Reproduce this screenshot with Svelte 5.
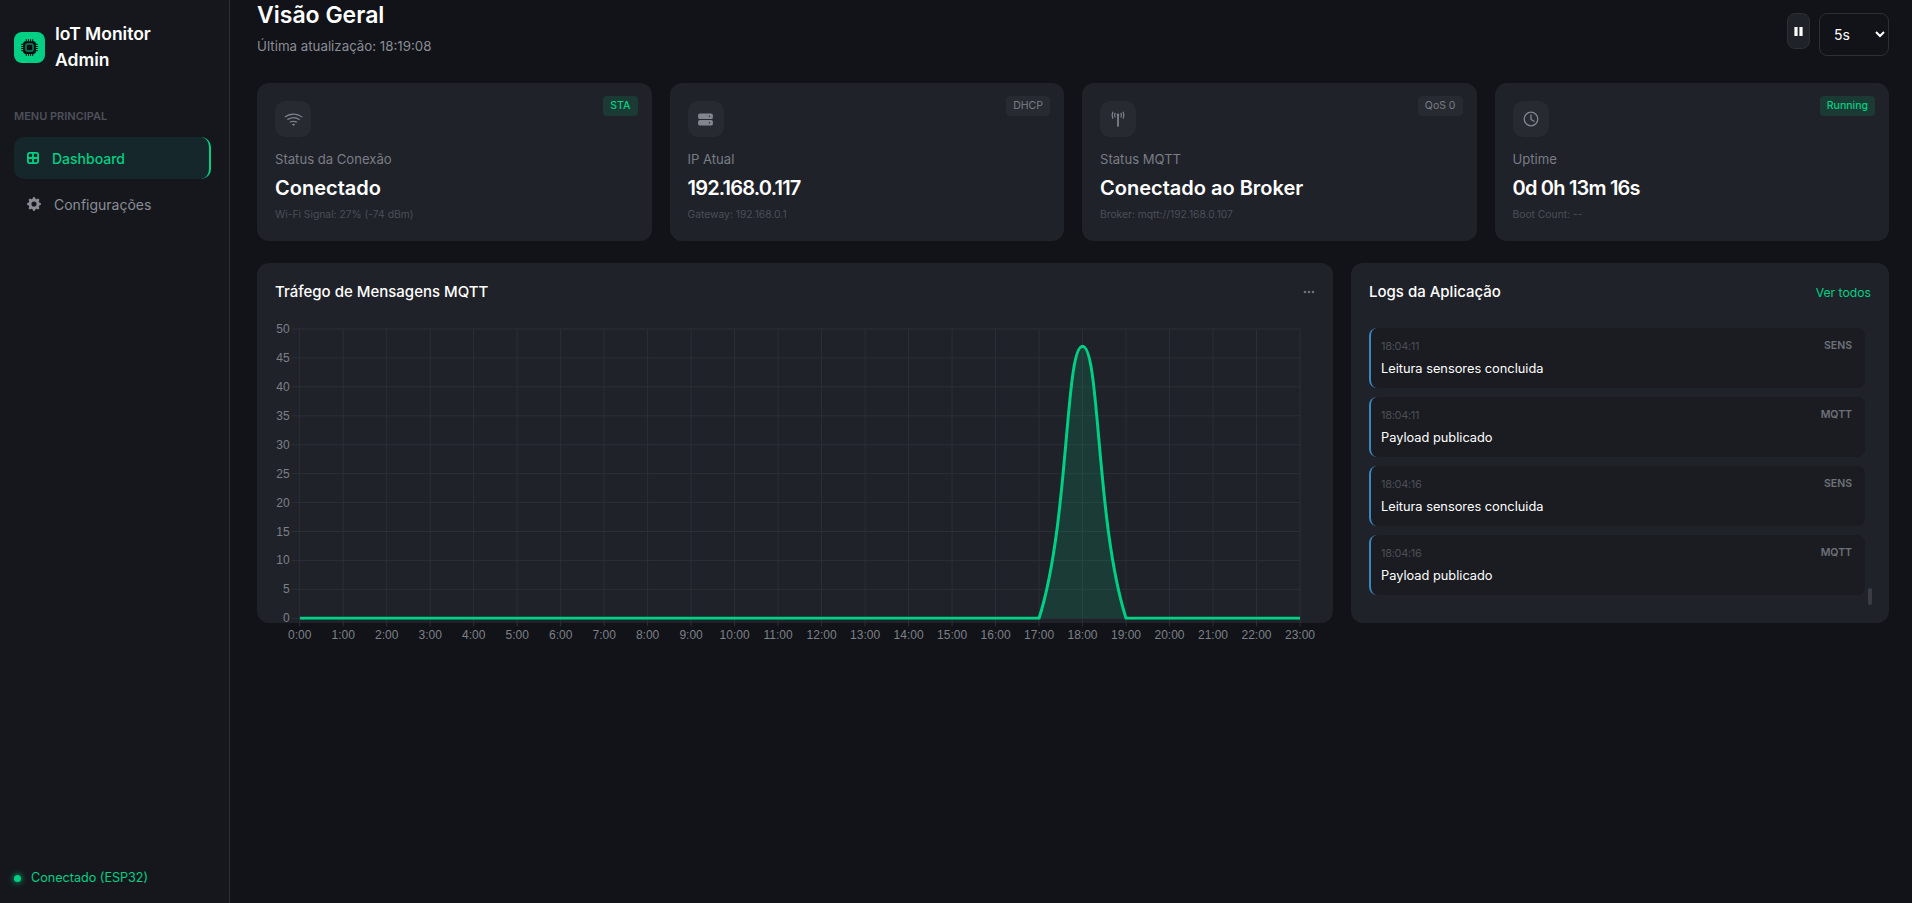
<script>
  const stats = [
    { icon: 'wifi', label: 'Status da Conexão', value: 'Conectado', sub: 'Wi-Fi Signal: 27% (-74 dBm)', badge: 'STA', on: true },
    { icon: 'server', label: 'IP Atual', value: '192.168.0.117', sub: 'Gateway: 192.168.0.1', badge: 'DHCP', on: false, numeric: true },
    { icon: 'antenna', label: 'Status MQTT', value: 'Conectado ao Broker', sub: 'Broker: mqtt://192.168.0.107', badge: 'QoS 0', on: false },
    { icon: 'clock', label: 'Uptime', value: '0d 0h 13m 16s', sub: 'Boot Count: --', badge: 'Running', on: true, numeric: true },
  ];

  const logs = [
    { time: '18:04:11', tag: 'SENS', text: 'Leitura sensores concluida' },
    { time: '18:04:11', tag: 'MQTT', text: 'Payload publicado' },
    { time: '18:04:16', tag: 'SENS', text: 'Leitura sensores concluida' },
    { time: '18:04:16', tag: 'MQTT', text: 'Payload publicado' },
  ];

  // chart geometry, in svg coordinates (svg starts at the card's left edge)
  const W = 1076, H = 340;
  const left = 42.7, right = 1043, top = 16, bottom = 305.3;
  const stepX = (right - left) / 23;
  const yScale = (bottom - top) / 50;
  const xAt = (i) => left + i * stepX;
  const yAt = (v) => bottom - v * yScale;

  const hours = Array.from({ length: 24 }, (_, i) => i);
  const ticks = [50, 45, 40, 35, 30, 25, 20, 15, 10, 5, 0];
  const values = hours.map((h) => (h === 18 ? 47 : 0));

  // bezier smoothing with tension 0.4, control points capped to the plot area
  function controlPoints(pts, t = 0.4) {
    return pts.map((p, i) => {
      const a = pts[i - 1] ?? p, b = pts[i + 1] ?? p;
      const d1 = Math.hypot(p.x - a.x, p.y - a.y), d2 = Math.hypot(b.x - p.x, b.y - p.y);
      const sum = d1 + d2 || 1;
      const fa = (t * d1) / sum, fb = (t * d2) / sum;
      return {
        px: p.x - fa * (b.x - a.x), py: Math.min(bottom, p.y - fa * (b.y - a.y)),
        nx: p.x + fb * (b.x - a.x), ny: Math.min(bottom, p.y + fb * (b.y - a.y)),
      };
    });
  }

  const pts = values.map((v, i) => ({ x: xAt(i), y: yAt(v) }));
  const cps = controlPoints(pts);
  const linePath = pts.reduce((d, p, i) => {
    if (i === 0) return `M${p.x} ${p.y}`;
    return `${d} C${cps[i - 1].nx} ${cps[i - 1].ny} ${cps[i].px} ${cps[i].py} ${p.x} ${p.y}`;
  }, '');
  const areaPath = `${linePath} L${right} ${bottom} L${left} ${bottom} Z`;
</script>

<div class="layout">
  <aside class="sidebar">
    <div class="brand">
      <span class="brand-icon">
        <svg viewBox="0 0 16 16" width="17" height="17" fill="#0c0e12">
          <path d="M5 0a.5.5 0 0 1 .5.5V2h1V.5a.5.5 0 0 1 1 0V2h1V.5a.5.5 0 0 1 1 0V2h1V.5a.5.5 0 0 1 1 0V2A2.5 2.5 0 0 1 14 4.5h1.500a.5.5 0 0 1 0 1H14v1h1.500a.5.5 0 0 1 0 1H14v1h1.500a.5.5 0 0 1 0 1H14v1h1.500a.5.5 0 0 1 0 1H14a2.500 2.500 0 0 1-2.500 2.500v1.500a.5.5 0 0 1-1 0V14h-1v1.500a.5.5 0 0 1-1 0V14h-1v1.500a.5.5 0 0 1-1 0V14h-1v1.500a.5.5 0 0 1-1 0V14A2.500 2.500 0 0 1 2 11.500H.5a.5.5 0 0 1 0-1H2v-1H.5a.5.5 0 0 1 0-1H2v-1H.5a.5.5 0 0 1 0-1H2v-1H.5a.5.5 0 0 1 0-1H2A2.500 2.500 0 0 1 4.500 2V.5A.5.5 0 0 1 5 0Z"/>
          <rect x="4.700" y="4.700" width="6.600" height="6.600" rx=".6" fill="#0c0e12" stroke="#00d084" stroke-width=".9"/>
        </svg>
      </span>
      <span class="brand-name">IoT Monitor Admin</span>
    </div>

    <p class="menu-title">MENU PRINCIPAL</p>

    <nav class="menu">
      <a class="menu-item active" href="#dashboard">
        <svg viewBox="0 0 16 16" width="12" height="12" fill="none" stroke="currentColor" stroke-width="2.400">
          <rect x="1.200" y="1.200" width="13.600" height="13.600" rx="2"/>
          <path d="M8 1v14M1 8h14"/>
        </svg>
        <span>Dashboard</span>
      </a>
      <a class="menu-item" href="#config">
        <svg viewBox="0 0 16 16" width="14" height="14" fill="currentColor">
          <path d="M9.405 1.050c-.413-1.400-2.397-1.400-2.810 0l-.1.340a1.464 1.464 0 0 1-2.105.872l-.31-.170c-1.283-.698-2.686.705-1.987 1.987l.169.311c.446.820.023 1.841-.872 2.105l-.340.100c-1.400.413-1.400 2.397 0 2.810l.340.100a1.464 1.464 0 0 1 .872 2.105l-.170.310c-.698 1.283.705 2.686 1.987 1.987l.311-.169a1.464 1.464 0 0 1 2.105.872l.100.340c.413 1.400 2.397 1.400 2.810 0l.100-.340a1.464 1.464 0 0 1 2.105-.872l.310.170c1.283.698 2.686-.705 1.987-1.987l-.169-.311a1.464 1.464 0 0 1 .872-2.105l.340-.100c1.400-.413 1.400-2.397 0-2.810l-.340-.100a1.464 1.464 0 0 1-.872-2.105l.170-.310c.698-1.283-.705-2.686-1.987-1.987l-.311.169a1.464 1.464 0 0 1-2.105-.872l-.100-.340ZM8 10.930a2.929 2.929 0 1 1 0-5.860 2.929 2.929 0 0 1 0 5.858Z"/>
        </svg>
        <span>Configurações</span>
      </a>
    </nav>

    <div class="device">
      <span class="dot"></span>
      <span>Conectado (ESP32)</span>
    </div>
  </aside>

  <main class="content">
    <header class="page-head">
      <div>
        <h1>Visão Geral</h1>
        <p class="updated">Última atualização: 18:19:08</p>
      </div>
      <div class="controls">
        <button class="pause" aria-label="Pausar">
          <svg viewBox="0 0 9 9" width="9" height="9" fill="#fff"><rect width="3.200" height="9" x=".4"/><rect width="3.200" height="9" x="5.400"/></svg>
        </button>
        <select class="interval">
          <option>5s</option>
          <option>10s</option>
          <option>30s</option>
        </select>
      </div>
    </header>

    <section class="stats">
      {#each stats as s}
        <article class="card stat">
          <span class="badge" class:on={s.on}>{s.badge}</span>
          <span class="stat-icon">
            {#if s.icon === 'wifi'}
              <svg viewBox="0 0 16 16" width="19" height="19" fill="currentColor">
                <path d="M15.384 6.115a.485.485 0 0 0-.047-.736A12.440 12.440 0 0 0 8 3C5.259 3 2.723 3.882.663 5.379a.485.485 0 0 0-.048.736.518.518 0 0 0 .668.050A11.448 11.448 0 0 1 8 4c2.507 0 4.827.802 6.716 2.164.205.148.490.130.668-.049Z"/>
                <path d="M13.229 8.271a.482.482 0 0 0-.063-.745A9.455 9.455 0 0 0 8 6c-1.905 0-3.680.560-5.166 1.526a.480.480 0 0 0-.063.745.525.525 0 0 0 .652.065A8.460 8.460 0 0 1 8 7a8.460 8.460 0 0 1 4.576 1.336c.206.132.480.108.653-.065Zm-2.183 2.183c.226-.226.185-.605-.100-.750A6.473 6.473 0 0 0 8 9c-1.060 0-2.062.254-2.946.704-.285.145-.326.524-.100.750l.015.015c.160.160.407.190.611.090A5.478 5.478 0 0 1 8 10c.868 0 1.690.201 2.420.560.203.100.450.070.610-.091l.016-.015ZM9.060 12.440c.196-.196.198-.520-.040-.660A1.990 1.990 0 0 0 8 11.500a1.990 1.990 0 0 0-1.020.280c-.238.140-.236.464-.040.660l.706.706a.500.500 0 0 0 .707 0l.707-.707Z"/>
              </svg>
            {:else if s.icon === 'server'}
              <svg viewBox="0 0 16 14" width="15" height="13" fill="currentColor">
                <path d="M2 .5h12a2 2 0 0 1 2 2v2a2 2 0 0 1-2 2H2a2 2 0 0 1-2-2v-2a2 2 0 0 1 2-2Zm9.500 3a.75.75 0 1 0 1.500 0 .75.75 0 0 0-1.500 0ZM2 7.500h12a2 2 0 0 1 2 2v2a2 2 0 0 1-2 2H2a2 2 0 0 1-2-2v-2a2 2 0 0 1 2-2Zm9.500 3a.75.75 0 1 0 1.500 0 .75.75 0 0 0-1.500 0Z" fill-rule="evenodd"/>
              </svg>
            {:else if s.icon === 'antenna'}
              <svg viewBox="0 0 16 16" width="16" height="16" fill="none" stroke="currentColor" stroke-width="1.200" stroke-linecap="round">
                <path d="M8 4.500V15" stroke-width="1.700"/>
                <circle cx="8" cy="3.800" r="1.200" fill="currentColor" stroke="none"/>
                <path d="M5 2.200c-.5 1.200-.5 2.600 0 3.800M11 2.200c.5 1.200.5 2.600 0 3.800M2.800 1.200c-.9 1.800-.9 4.200 0 6M13.200 1.200c.9 1.800.9 4.200 0 6"/>
              </svg>
            {:else}
              <svg viewBox="0 0 16 16" width="16" height="16" fill="none" stroke="currentColor" stroke-width="1.300" stroke-linecap="round" stroke-linejoin="round">
                <circle cx="8" cy="8" r="6.800"/>
                <path d="M8 3.800V8.500l3 1.800"/>
              </svg>
            {/if}
          </span>
          <p class="stat-label">{s.label}</p>
          <p class="stat-value" class:numeric={s.numeric}>{s.value}</p>
          <p class="stat-sub">{s.sub}</p>
        </article>
      {/each}
    </section>

    <section class="panels">
      <article class="card chart-card">
        <div class="panel-head">
          <h2>Tráfego de Mensagens MQTT</h2>
          <svg class="more" viewBox="0 0 12 4" width="12" height="4" fill="#6e7179">
            <circle cx="2" cy="2" r="1.300"/><circle cx="6" cy="2" r="1.300"/><circle cx="10" cy="2" r="1.300"/>
          </svg>
        </div>
        <svg class="chart" viewBox="0 0 {W} {H}" width={W} height={H}>
          <defs>
            <clipPath id="plot">
              <rect x={left} y={top} width={right - left} height={bottom - top + 1.500}/>
            </clipPath>
          </defs>

          {#each ticks as t}
            <line class="grid" x1={left - 8} x2={right} y1={yAt(t)} y2={yAt(t)}/>
            <text class="tick" x={left - 10} y={yAt(t) + 4} text-anchor="end">{t}</text>
          {/each}
          {#each hours as h}
            <line class="grid" x1={xAt(h)} x2={xAt(h)} y1={top} y2={bottom + 8}/>
            <text class="tick" x={xAt(h)} y={bottom + 21} text-anchor="middle">{h}:00</text>
          {/each}

          <g clip-path="url(#plot)">
            <path d={areaPath} fill="#00d084" fill-opacity="0.15"/>
            <path d={linePath} fill="none" stroke="#00d084" stroke-width="3"/>
          </g>
        </svg>
      </article>

      <article class="card logs-card">
        <div class="panel-head">
          <h2>Logs da Aplicação</h2>
          <a class="see-all" href="#logs">Ver todos</a>
        </div>
        <div class="log-list">
          {#each logs as log}
            <div class="log">
              <div class="log-top">
                <span class="log-time">{log.time}</span>
                <span class="log-tag">{log.tag}</span>
              </div>
              <p class="log-text">{log.text}</p>
            </div>
          {/each}
          <span class="thumb"></span>
        </div>
      </article>
    </section>
  </main>
</div>

<style>
  :global(body) {
    background: #111318;
    color: #fff;
    font-family: Inter, "Liberation Sans", sans-serif;
    overflow: hidden;
  }

  p, h1, h2 { margin: 0; }

  .layout {
    display: flex;
    height: 903px;
  }

  /* sidebar */
  .sidebar {
    width: 230px;
    flex: none;
    box-sizing: border-box;
    background: #15171d;
    border-right: 1px solid #2c2f36;
    padding: 21px 18px 15px 14px;
    display: flex;
    flex-direction: column;
  }

  .brand {
    display: flex;
    align-items: center;
    gap: 10px;
  }

  .brand-icon {
    width: 31px;
    height: 31px;
    flex: none;
    border-radius: 8px;
    background: #00d084;
    display: flex;
    align-items: center;
    justify-content: center;
  }

  .brand-name {
    width: 120px;
    font-size: 17.500px;
    font-weight: 600;
    line-height: 26px;
  }

  .menu-title {
    margin-top: 35px;
    color: #4d5059;
    font-size: 11px;
    font-weight: 600;
    line-height: 16px;
  }

  .menu {
    margin-top: 13px;
    display: flex;
    flex-direction: column;
    gap: 4px;
  }

  .menu-item {
    height: 42px;
    box-sizing: border-box;
    padding-left: 13px;
    display: flex;
    align-items: center;
    gap: 13px;
    border-radius: 10px;
    color: #8a8d95;
    font-size: 14px;
    text-decoration: none;
  }

  .menu-item.active {
    background: #15272a;
    border-right: 2px solid #00d084;
    color: #00d084;
    font-weight: 500;
  }

  .device {
    margin-top: auto;
    display: flex;
    align-items: center;
    gap: 10px;
    color: #00d084;
    font-size: 12.600px;
    line-height: 20px;
  }

  .dot {
    width: 7px;
    height: 7px;
    border-radius: 50%;
    background: #00d084;
    box-shadow: 0 0 6px #00d084;
  }

  /* main area */
  .content {
    flex: 1;
    min-width: 0;
    padding: 0 23px 0 27px;
  }

  .page-head {
    height: 83px;
    display: flex;
    justify-content: space-between;
    align-items: flex-start;
  }

  h1 {
    font-size: 23px;
    font-weight: 600;
    line-height: 30px;
  }

  .updated {
    margin-top: 6px;
    color: #8a8d95;
    font-size: 13.300px;
    line-height: 20px;
  }

  .controls {
    margin-top: 13px;
    display: flex;
    align-items: flex-start;
    gap: 9px;
  }

  .pause {
    width: 23px;
    height: 36px;
    padding: 0;
    border: 1px solid #2c2f36;
    border-radius: 8px;
    background: #1f2229;
    display: flex;
    align-items: center;
    justify-content: center;
  }

  .interval {
    width: 70px;
    height: 43px;
    padding: 0 8px 0 10px;
    border: 1px solid #2c2f36;
    border-radius: 8px;
    background: #111318;
    color: #fff;
    font-family: inherit;
    font-size: 14px;
  }

  .stats {
    display: grid;
    grid-template-columns: repeat(4, 1fr);
    gap: 18px;
  }

  .card {
    position: relative;
    background: #1f2229;
    border-radius: 12px;
  }

  .stat {
    height: 158px;
    box-sizing: border-box;
    padding: 18px;
  }

  .badge {
    position: absolute;
    top: 13px;
    right: 14px;
    height: 20px;
    padding: 0 7px;
    border-radius: 4px;
    background: #272a31;
    color: #7a7d85;
    font-size: 10.500px;
    line-height: 20px;
  }

  .badge.on {
    background: #1a3a33;
    color: #00d084;
    font-weight: 500;
  }

  .stat-icon {
    width: 36px;
    height: 36px;
    border-radius: 10px;
    background: #272a31;
    color: #82858d;
    display: flex;
    align-items: center;
    justify-content: center;
  }

  .stat-label {
    margin-top: 13px;
    color: #7a7d85;
    font-size: 13.100px;
    line-height: 18px;
  }

  .stat-value {
    margin-top: 7px;
    font-size: 20px;
    font-weight: 600;
    line-height: 26px;
  }

  .stat-value.numeric {
    letter-spacing: -0.8px;
  }

  .stat-sub {
    margin-top: 5px;
    color: #4b4e57;
    font-size: 10.300px;
    line-height: 16px;
  }

  .panels {
    margin-top: 22px;
    display: grid;
    grid-template-columns: 2fr 1fr;
    gap: 18px;
  }

  .chart-card,
  .logs-card {
    height: 360px;
    box-sizing: border-box;
  }

  .panel-head {
    display: flex;
    align-items: center;
    justify-content: space-between;
    padding: 18px 18px 0;
    height: 22px;
  }

  h2 {
    font-size: 15px;
    font-weight: 500;
    line-height: 22px;
  }

  .chart {
    display: block;
    margin-top: 10px;
    overflow: visible;
  }

  .grid {
    stroke: #2c2f36;
    stroke-width: 1;
  }

  .tick {
    fill: #7d8087;
    font-family: "Liberation Sans", sans-serif;
    font-size: 12px;
  }

  .see-all {
    color: #00d084;
    font-size: 12.200px;
    text-decoration: none;
  }

  .log-list {
    position: relative;
    margin: 25px 18px 0;
    height: 277px;
    padding-right: 6px;
    display: flex;
    flex-direction: column;
    gap: 9px;
  }

  .log {
    height: 60px;
    flex: none;
    box-sizing: border-box;
    padding: 9px 13px 0 10px;
    border-left: 2px solid #3a86c0;
    border-radius: 8px;
    background: #1a1c21;
  }

  .log-top {
    display: flex;
    justify-content: space-between;
    align-items: center;
    line-height: 18px;
  }

  .log-time {
    color: #4b4e57;
    font-size: 11px;
    letter-spacing: -0.3px;
  }

  .log-tag {
    color: #6e7179;
    font-size: 10.500px;
    font-weight: 600;
  }

  .log-text {
    margin-top: 4px;
    font-size: 12.800px;
    line-height: 20px;
  }

  .thumb {
    position: absolute;
    right: -1px;
    bottom: 0;
    width: 4px;
    height: 17px;
    border-radius: 2px;
    background: #3a3d44;
  }
</style>
